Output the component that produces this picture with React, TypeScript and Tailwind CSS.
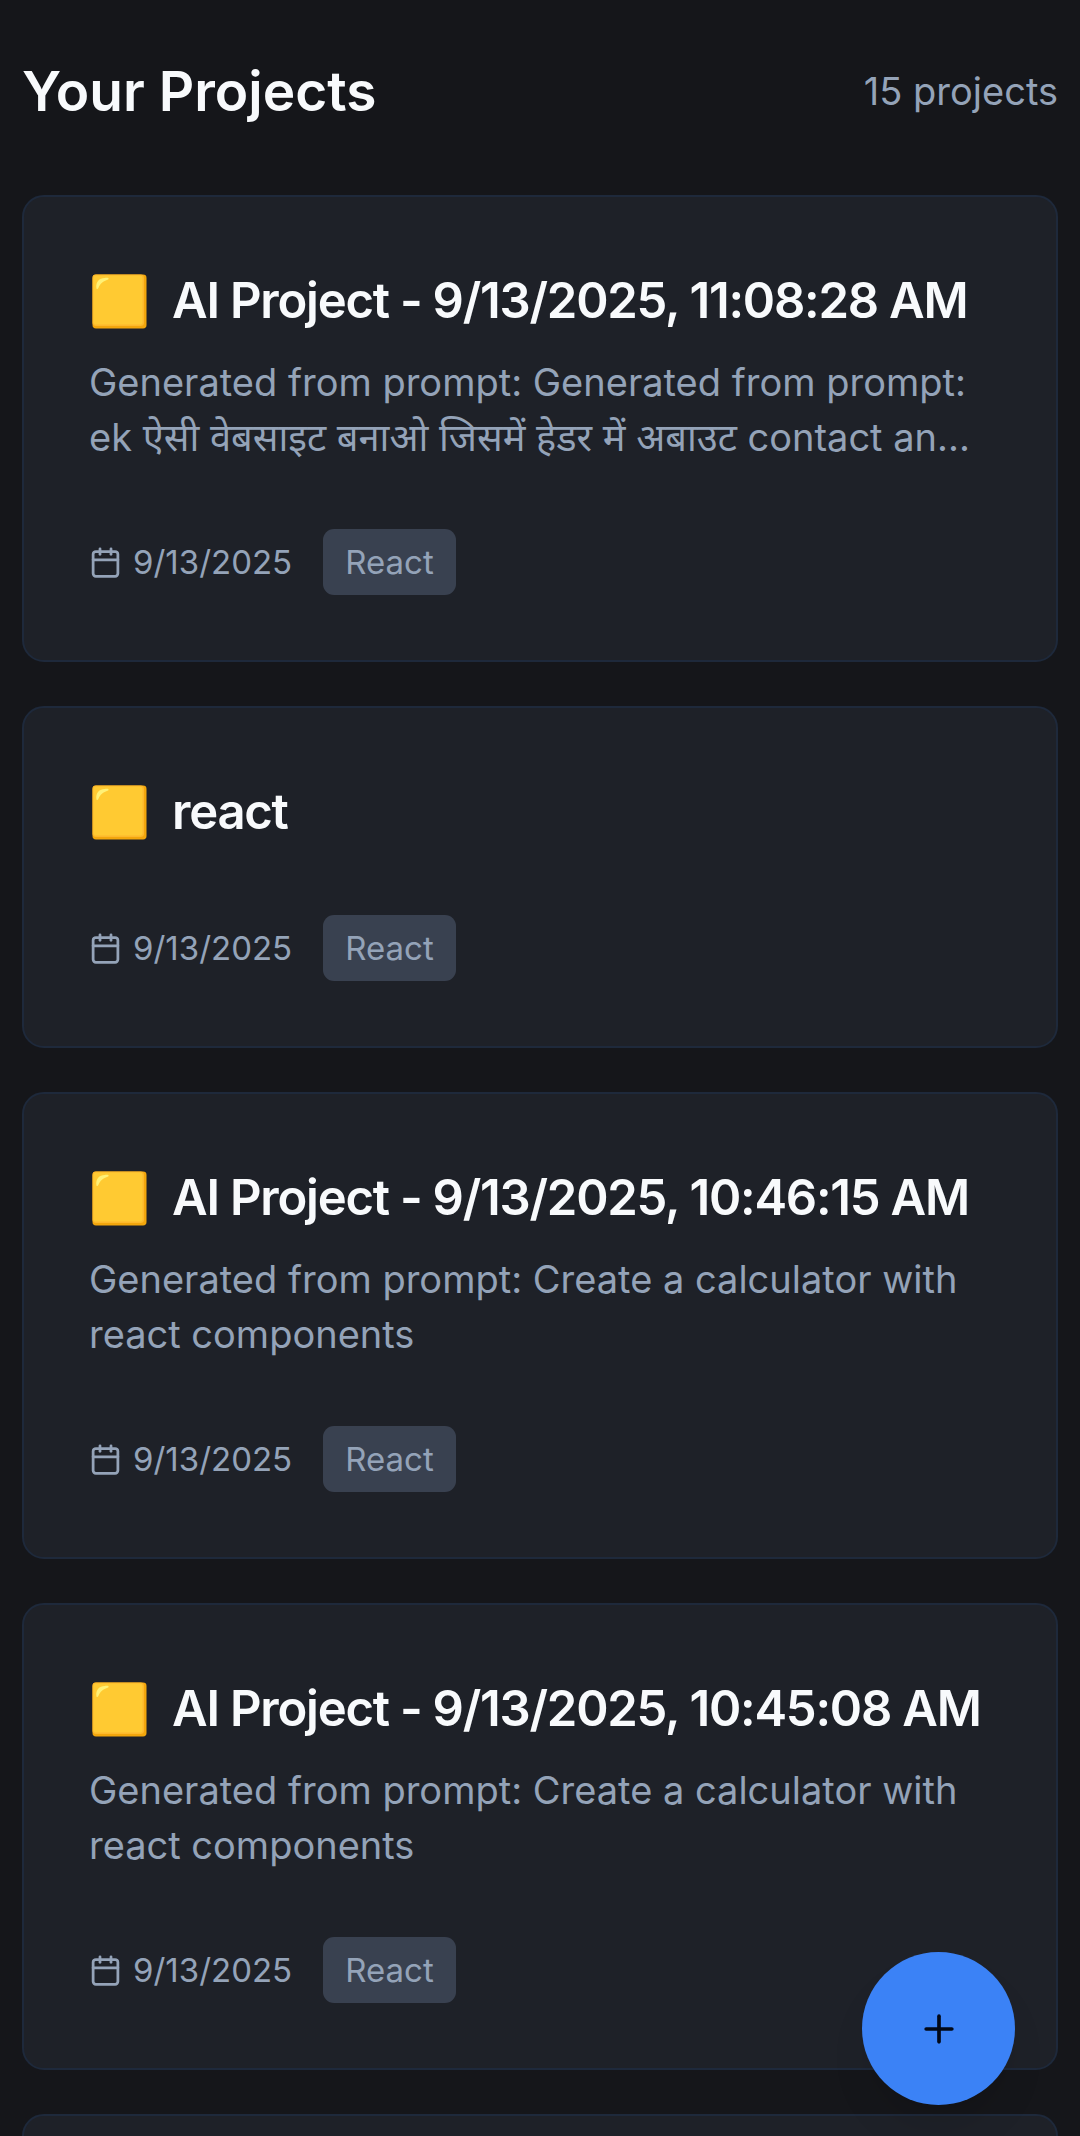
import { Calendar, Plus } from "lucide-react";

type Project = {
  id: number;
  title: string;
  description?: string;
  date: string;
  framework: string;
};

const projects: Project[] = [
  {
    id: 1,
    title: "AI Project - 9/13/2025, 11:08:28 AM",
    description:
      "Generated from prompt: Generated from prompt: ek ऐसी वेबसाइट बनाओ जिसमें हेडर में अबाउट contact an...",
    date: "9/13/2025",
    framework: "React",
  },
  { id: 2, title: "react", date: "9/13/2025", framework: "React" },
  {
    id: 3,
    title: "AI Project - 9/13/2025, 10:46:15 AM",
    description: "Generated from prompt: Create a calculator with react components",
    date: "9/13/2025",
    framework: "React",
  },
  {
    id: 4,
    title: "AI Project - 9/13/2025, 10:45:08 AM",
    description: "Generated from prompt: Create a calculator with react components",
    date: "9/13/2025",
    framework: "React",
  },
  { id: 5, title: "react", date: "9/13/2025", framework: "React" },
];

function YellowSquare() {
  return (
    <svg viewBox="0 0 56 56" className="size-[55px] shrink-0" aria-hidden="true">
      <rect x="0.5" y="0.5" width="55" height="55" rx="3.5" fill="#f2a60c" />
      <rect x="0.5" y="0.5" width="52.5" height="52.5" rx="3.5" fill="#fdb92c" />
      <rect x="1.5" y="1.5" width="50" height="50" rx="3" fill="#ffca32" />
      <path
        d="M4.5 14.5C3.5 8 7.5 4 13 4C16 3.7 18 4.2 16.5 5.5C11 7.2 8.5 9.5 6.6 14C5.8 15.6 4.8 15.8 4.5 14.5Z"
        fill="#fff176"
      />
    </svg>
  );
}

function ProjectCard({ project }: { project: Project }) {
  return (
    <article className="rounded-[22px] border-2 border-[#1e293b] bg-[#1e2128] p-[65px]">
      <div className="flex items-center gap-[25px] pl-[3px]">
        <YellowSquare />
        <h2 className="truncate text-[49px] leading-[78px] font-semibold tracking-tight text-[#f8fafc]">
          {project.title}
        </h2>
      </div>
      {project.description && (
        <p className="mt-[15px] line-clamp-2 text-[38px] leading-[55px] text-[#94a3b8]">
          {project.description}
        </p>
      )}
      <div className="mt-16 flex items-center gap-[31px] text-[33px] leading-[44px] text-[#94a3b8]">
        <span className="flex items-center gap-[11px]">
          <Calendar className="size-[33px]" strokeWidth={2} aria-hidden="true" />
          <time>{project.date}</time>
        </span>
        <span className="rounded-[11px] bg-[#394150] px-[22px] py-[11px]">{project.framework}</span>
      </div>
    </article>
  );
}

export default function App() {
  return (
    <div className="h-screen overflow-y-auto bg-[#15161a] font-['Inter','Noto_Sans_Devanagari','Noto_Sans',sans-serif] [scrollbar-width:none]">
      <main className="px-[22px] pt-[54px] pb-[66px]">
        <header className="mb-[67px] flex items-center justify-between">
          <h1 className="text-[55px] leading-[74px] font-semibold text-[#f8fafc]">Your Projects</h1>
          <span className="text-[38px] leading-[55px] text-[#94a3b8]">15 projects</span>
        </header>
        <section aria-label="Projects" className="flex flex-col gap-11">
          {projects.map((project) => (
            <ProjectCard key={project.id} project={project} />
          ))}
        </section>
      </main>
      <button
        type="button"
        aria-label="New project"
        className="fixed right-[65px] bottom-[31px] flex size-[153px] items-center justify-center rounded-full bg-[#3b82f6] text-[#020817] shadow-[0_28px_42px_-8px_rgba(0,0,0,0.1),0_11px_17px_-11px_rgba(0,0,0,0.1)]"
      >
        <Plus className="size-11" strokeWidth={2} />
      </button>
    </div>
  );
}
